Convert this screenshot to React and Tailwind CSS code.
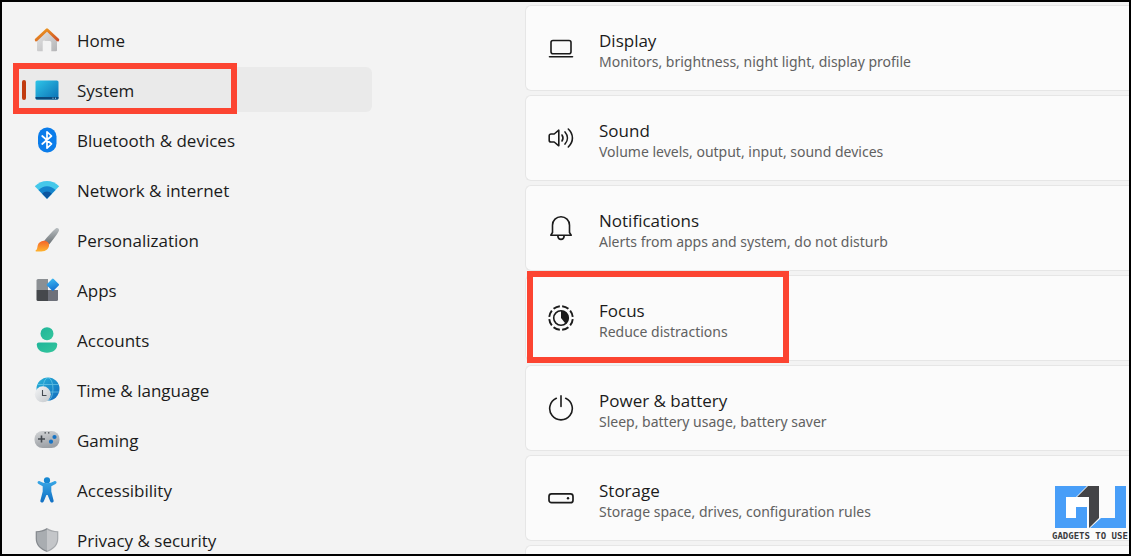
import React from "react";

function Svg({ size = 26, children, ...rest }) {
  return (
    <svg width={size} height={size} viewBox={`0 0 ${size} ${size}`} fill="none" aria-hidden="true" className="shrink-0" {...rest}>
      {children}
    </svg>
  );
}

function Gradient({ id, from, to, x2 = 1, y2 = 1 }) {
  return (
    <linearGradient id={id} x1="0" y1="0" x2={x2} y2={y2}>
      <stop stopColor={from} />
      <stop offset="1" stopColor={to} />
    </linearGradient>
  );
}

const HomeIcon = () => (
  <Svg>
    <defs>
      <Gradient id="wall" from="#e6e6e6" to="#b4b4b6" />
      <Gradient id="roof" from="#f0a01e" to="#cf4f27" />
    </defs>
    <path d="M3 12 13 3l10 9v11.3a1 1 0 0 1-1 1h-4.7V15.500a1.500 1.500 0 0 0-1.500-1.500h-4.600A1.500 1.500 0 0 0 8.700 15.500v8.800H4a1 1 0 0 1-1-1z" fill="url(#wall)" />
    <path d="M2.200 12.900 13 2.800l10.800 10.100" stroke="url(#roof)" strokeWidth="2.900" strokeLinecap="round" strokeLinejoin="round" />
  </Svg>
);

const SystemIcon = () => (
  <Svg>
    <defs><Gradient id="screen" from="#2fc5e8" to="#0b6fb4" /></defs>
    <rect x="1.500" y="3.500" width="23" height="19" rx="1.600" fill="url(#screen)" />
    <path d="M1.500 19.900h23v1.100a1.500 1.500 0 0 1-1.500 1.500H3a1.500 1.500 0 0 1-1.500-1.500z" fill="#0b4a7d" />
    <path d="M18.500 21.200h1M21 21.200h1" stroke="#bfe4f5" strokeWidth="1" />
  </Svg>
);

const BluetoothIcon = () => (
  <Svg>
    <rect x="4" y="0.500" width="18.500" height="25" rx="9" fill="#0a7cea" />
    <path d="m8.200 9 9.300 8-4.500 4.200V4.800L17.500 9l-9.300 8" stroke="#fff" strokeWidth="1.700" strokeLinejoin="round" strokeLinecap="round" />
  </Svg>
);

const NetworkIcon = () => (
  <Svg>
    <path d="M0.800 9.300C7.600 2.100 18.400 2.100 25.200 9.300L13 21.800z" fill="#45c8ea" />
    <path d="M4.500 13c4.700-5.100 12.300-5.100 17 0L13 21.800z" fill="#1584cc" />
    <path d="M8.200 16.800c2.700-3 6.900-3 9.600 0L13 21.800z" fill="#0c569f" />
  </Svg>
);

const BrushIcon = () => (
  <Svg>
    <defs>
      <Gradient id="handle" from="#b9bec1" to="#6a7074" x2={0} />
      <Gradient id="bristle" from="#f4642a" to="#ffb52f" x2={0} />
    </defs>
    <path d="M21.700 1.500c1.600-1.300 3.900.100 3.200 2.200-.800 2.500-6 9.200-9.800 13.700l-4.800-3.700C13.500 9.700 18.300 4.300 21.700 1.500z" fill="url(#handle)" />
    <path d="M9.800 13.700c2.900-.3 5.800 2.100 5.200 5.200-.8 4.500-5.800 6.400-12.900 5.500-.7-.1-.8-.8-.2-1.200 1.500-1 1.300-2.800 1.800-4.800.7-2.700 3-4.500 6.100-4.700z" fill="url(#bristle)" />
  </Svg>
);

const AppsIcon = () => (
  <Svg>
    <defs><Gradient id="diamond" from="#3fc0f5" to="#1774d2" x2={0.3} /></defs>
    <path d="M4 2h10v11H2.500V3.500A1.500 1.500 0 0 1 4 2z" fill="#8b8f93" />
    <path d="M2.500 13H14v11H4a1.500 1.500 0 0 1-1.500-1.500z" fill="#45484c" />
    <path d="M14 13h10v9.500a1.500 1.500 0 0 1-1.500 1.500H14z" fill="#6e717a" />
    <path d="m18 1.900-5 5a1.200 1.200 0 0 0 0 1.700l5 5a1.200 1.200 0 0 0 1.700 0l5-5a1.200 1.200 0 0 0 0-1.700l-5-5a1.200 1.200 0 0 0-1.700 0z" fill="url(#diamond)" />
  </Svg>
);

const AccountsIcon = () => (
  <Svg>
    <defs><Gradient id="person" from="#1fb59a" to="#35c69c" /></defs>
    <circle cx="13" cy="6.700" r="6.500" fill="url(#person)" />
    <path d="M4.800 15.500h16.400a2 2 0 0 1 2 2c0 5-4.200 8.200-10.200 8.200S2.800 22.500 2.800 17.500a2 2 0 0 1 2-2z" fill="url(#person)" />
  </Svg>
);

const TimeIcon = () => (
  <Svg>
    <defs>
      <Gradient id="globe" from="#27b5d9" to="#1169bd" />
      <Gradient id="clock" from="#f5f6f7" to="#c3c7cb" />
    </defs>
    <circle cx="14" cy="12" r="11.500" fill="url(#globe)" />
    <g stroke="#86d9f1" strokeWidth="0.900" opacity="0.600">
      <path d="M3.500 7.500h21M2.800 15h22.400" />
      <ellipse cx="14" cy="12" rx="5" ry="11.300" />
    </g>
    <circle cx="8.800" cy="17.300" r="8" fill="url(#clock)" />
    <path d="M8.500 13v5.500h4" stroke="#454b52" strokeWidth="1.100" />
  </Svg>
);

const GamingIcon = () => (
  <Svg>
    <defs><Gradient id="pad" from="#d3d5d7" to="#9da1a6" x2={0.3} /></defs>
    <rect x="0.500" y="4" width="25" height="17" rx="8" fill="url(#pad)" />
    <path d="M7.500 8.500v7M4 12h7" stroke="#44494f" strokeWidth="1.600" />
    <circle cx="20.500" cy="10" r="2.100" fill="#1673c4" />
    <circle cx="17" cy="14.700" r="2.100" fill="#1673c4" />
    <path d="M10.500 5.800h1.400M14 5.800h1.400" stroke="#3e4348" strokeWidth="1.200" />
  </Svg>
);

const AccessibilityIcon = () => (
  <Svg>
    <defs><Gradient id="figure" from="#38a7e6" to="#106ec2" x2={0} /></defs>
    <circle cx="13" cy="3.400" r="3.100" fill="#1687d2" />
    <path d="M3.700 4.800c.4-.9 1.300-1.100 2.200-.6C10 6.800 16 6.800 20.100 4.200c.9-.5 1.900-.3 2.300.6.400.9 0 1.800-.9 2.300L17.300 9.300v5.200l2.300 8.900c.3 1-.3 1.900-1.300 2.100-.9.200-1.800-.3-2.100-1.300L13.600 18h-1.200l-2.600 6.200c-.4 1-1.200 1.500-2.100 1.300-1-.2-1.600-1.100-1.300-2.100l2.300-8.900V9.300L4.600 7.100c-.9-.5-1.300-1.400-.9-2.300z" fill="url(#figure)" />
  </Svg>
);

const ShieldIcon = () => (
  <Svg>
    <path d="M13 1c3 2.100 6.500 3.100 11.300 3.200v7.500c0 6.200-4.200 10.700-11.300 13.300z" fill="#a5a8ac" />
    <path d="M13 1C10 3.100 6.500 4.100 1.700 4.200v7.500c0 6.200 4.200 10.700 11.300 13.300z" fill="#85898e" />
    <path d="M13 2.500c2.800 1.700 6 2.600 10.100 2.800v6.400c0 5.500-3.700 9.500-10.100 12z" fill="#c4c6c9" />
    <path d="M13 2.500C10.200 4.200 7 5.100 2.900 5.300v6.400c0 5.500 3.700 9.500 10.100 12z" fill="#a9adb1" />
  </Svg>
);

const DisplayIcon = () => (
  <Svg stroke="#1b1b1b" strokeLinecap="round">
    <rect x="3" y="5.500" width="20" height="13.200" rx="2" strokeWidth="1.600" />
    <path d="M1.500 21.800h23" strokeWidth="1.600" />
  </Svg>
);

const SoundIcon = () => (
  <Svg stroke="#1b1b1b" strokeWidth="1.600" strokeLinecap="round" strokeLinejoin="round">
    <path d="M10.800 5.200v15.600L6.200 17H3a1.800 1.800 0 0 1-1.800-1.800v-4.400A1.800 1.800 0 0 1 3 9h3.200z" />
    <path d="M14 10q2 3 0 6M17 6.900c3.200 3.700 3.200 8.500 0 12.200M20.300 4c5.500 5.300 5.500 12.700 0 18" />
  </Svg>
);

const BellIcon = () => (
  <Svg stroke="#1b1b1b" strokeWidth="1.600" strokeLinejoin="round">
    <path d="M4.500 17.500V10.200a8.500 8.500 0 0 1 17 0v7.300l1.700 2.700H2.800z" />
    <path d="M9.800 20.800c.6 4.800 5.800 4.800 6.400 0" />
  </Svg>
);

const FocusIcon = () => (
  <Svg>
    <circle cx="13" cy="13" r="11.800" stroke="#1b1b1b" strokeWidth="1.900" pathLength="80" strokeDasharray="7.400 2.600" strokeDashoffset="-1.300" />
    <circle cx="13" cy="13" r="7.300" stroke="#1b1b1b" strokeWidth="1.600" />
    <path d="M13 5.700a7.300 7.300 0 0 1 4.600 13L13 13z" fill="#1b1b1b" />
  </Svg>
);

const PowerIcon = () => (
  <Svg stroke="#1b1b1b" strokeWidth="1.600" strokeLinecap="round">
    <path d="M8.300 3.300a11.300 11.300 0 1 0 9.400 0M13 0.900v10.600" />
  </Svg>
);

const StorageIcon = () => (
  <Svg>
    <rect x="1" y="8.900" width="24" height="8.800" rx="2.500" stroke="#1b1b1b" strokeWidth="1.700" />
    <circle cx="20" cy="13.300" r="1.200" fill="#1b1b1b" />
  </Svg>
);

const navItems = [
  { label: "Home", Icon: HomeIcon },
  { label: "System", Icon: SystemIcon, active: true },
  { label: "Bluetooth & devices", Icon: BluetoothIcon },
  { label: "Network & internet", Icon: NetworkIcon },
  { label: "Personalization", Icon: BrushIcon },
  { label: "Apps", Icon: AppsIcon },
  { label: "Accounts", Icon: AccountsIcon },
  { label: "Time & language", Icon: TimeIcon },
  { label: "Gaming", Icon: GamingIcon },
  { label: "Accessibility", Icon: AccessibilityIcon },
  { label: "Privacy & security", Icon: ShieldIcon },
];

const cards = [
  { title: "Display", detail: "Monitors, brightness, night light, display profile", Icon: DisplayIcon },
  { title: "Sound", detail: "Volume levels, output, input, sound devices", Icon: SoundIcon },
  { title: "Notifications", detail: "Alerts from apps and system, do not disturb", Icon: BellIcon },
  { title: "Focus", detail: "Reduce distractions", Icon: FocusIcon, marked: true },
  { title: "Power & battery", detail: "Sleep, battery usage, battery saver", Icon: PowerIcon },
  { title: "Storage", detail: "Storage space, drives, configuration rules", Icon: StorageIcon },
];

function NavItem({ label, Icon, active }) {
  return (
    <li className="relative">
      <a
        href="#"
        aria-current={active ? "page" : undefined}
        className={`flex h-[45px] items-center gap-[17px] rounded-md pl-[18px] text-[17px] leading-6 ${active ? "bg-[#eaeaea]" : ""}`}
      >
        <Icon />
        <span className="pt-0.5">{label}</span>
      </a>
      {active && (
        <>
          <span className="absolute top-[13px] left-[6px] h-5 w-1 rounded-full bg-[#c13c10]" />
          <span className="pointer-events-none absolute -top-1 -left-[3px] h-[51px] w-[224px] border-6 border-[#fc4431]" />
        </>
      )}
    </li>
  );
}

function Card({ title, detail, Icon, marked }) {
  return (
    <li className="relative">
      <a href="#" className="flex h-[86px] items-center gap-[25px] rounded-l-md border border-r-0 border-[#e6e6e6] bg-[#fbfbfb] pl-[22px]">
        <Icon />
        <span className="flex flex-col pt-1.5">
          <span className="text-[17px] leading-[22px]">{title}</span>
          <span className="font-['Noto_Sans',sans-serif] text-[14px] leading-5 text-[#616161]">{detail}</span>
        </span>
      </a>
      {marked && <span className="pointer-events-none absolute -top-1 left-[2px] z-10 h-[92px] w-[262px] border-6 border-[#fc4431]" />}
    </li>
  );
}

function Watermark() {
  return (
    <div className="absolute right-0 bottom-3.5 flex w-[77px] flex-col gap-[3px] overflow-hidden">
      <svg width="72" height="43" viewBox="0 0 72 43" className="ml-[3px]" aria-hidden="true">
        <path d="M0 0H32L21 11H11V32H21V21H32V42H0z" fill="#489ef8" />
        <path d="M11 11h22v31H32V21H21v11H11z" fill="#fff" />
        <path d="M33 0H44V32L34 42V11H22z" fill="#444447" />
        <path d="M60 0H71V42H35L46 32H60z" fill="#489ef8" />
      </svg>
      <span className="font-['DejaVu_Sans_Mono',monospace] text-[9px] leading-2 font-bold whitespace-nowrap text-[#3b3b3e]">GADGETS TO USE</span>
    </div>
  );
}

export default function App() {
  return (
    <div className="relative flex h-screen overflow-hidden border-2 border-black bg-[#f3f3f3] font-['Open_Sans','Noto_Sans',sans-serif] text-[#1b1b1b]">
      <nav aria-label="Settings" className="w-[370px] shrink-0 pt-[15px] pl-[14px]">
        <ul className="flex flex-col gap-[5px]">
          {navItems.map((item) => <NavItem key={item.label} {...item} />)}
        </ul>
      </nav>
      <main className="ml-[153px] min-w-0 flex-1 pt-[3px]">
        <ul className="flex flex-col gap-1">
          {cards.map((card) => <Card key={card.title} {...card} />)}
          <li className="h-[86px] rounded-l-md border border-r-0 border-[#e6e6e6] bg-[#fbfbfb]" />
        </ul>
      </main>
      <Watermark />
    </div>
  );
}
